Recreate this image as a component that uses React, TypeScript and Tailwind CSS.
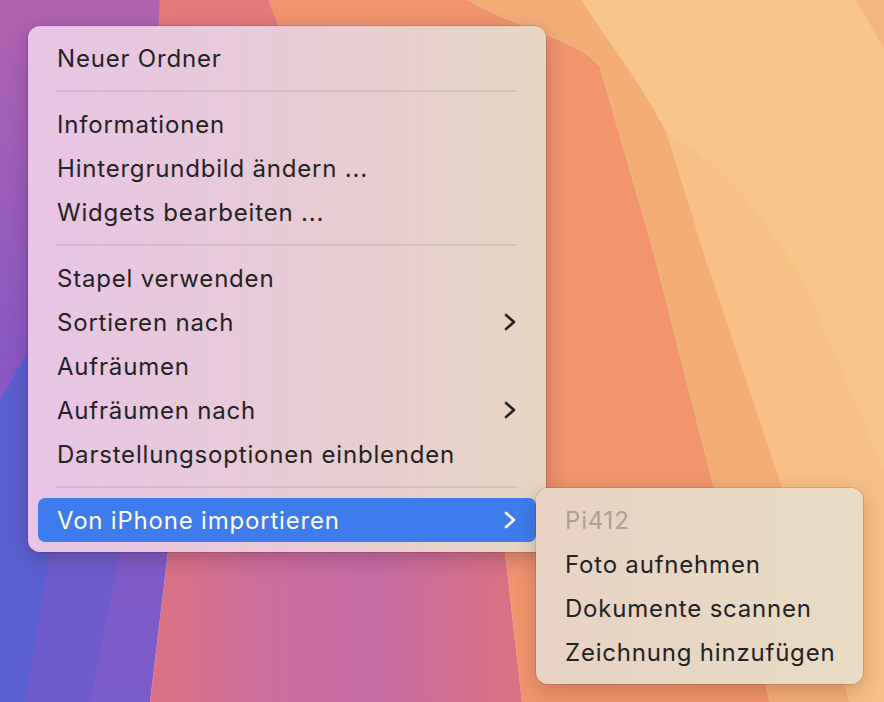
const font = { fontFamily: "Inter, 'Noto Sans', sans-serif" };

type Row = { label: string; sub?: boolean; active?: boolean } | "sep";

const rows: Row[] = [
  { label: "Neuer Ordner" },
  "sep",
  { label: "Informationen" },
  { label: "Hintergrundbild ändern ..." },
  { label: "Widgets bearbeiten ..." },
  "sep",
  { label: "Stapel verwenden" },
  { label: "Sortieren nach", sub: true },
  { label: "Aufräumen" },
  { label: "Aufräumen nach", sub: true },
  { label: "Darstellungsoptionen einblenden" },
  "sep",
  { label: "Von iPhone importieren", sub: true, active: true },
];

function Chevron({ white }: { white?: boolean }) {
  return (
    <svg width="12" height="18" viewBox="0 0 12 18" fill="none">
      <polyline
        points="2,2 10,9 2,16"
        stroke={white ? "#ffffff" : "#222222"}
        strokeWidth="2.6"
        strokeLinecap="round"
        strokeLinejoin="round"
      />
    </svg>
  );
}

function Wallpaper() {
  return (
    <svg className="absolute inset-0" width="884" height="702" viewBox="0 0 884 702">
      <defs>
        <linearGradient id="purple" x1="0" y1="0" x2="0" y2="1">
          <stop offset="0" stopColor="#b064b0" />
          <stop offset="0.5" stopColor="#8a58c2" />
          <stop offset="1" stopColor="#7a5cca" />
        </linearGradient>
        <linearGradient id="pink" x1="0" y1="0" x2="1" y2="0">
          <stop offset="0" stopColor="#dc7282" />
          <stop offset="0.3" stopColor="#cc6e9e" />
          <stop offset="0.6" stopColor="#c66ca6" />
          <stop offset="1" stopColor="#dc7280" />
        </linearGradient>
        <linearGradient id="pinkTop" x1="0" y1="0" x2="0" y2="1">
          <stop offset="0" stopColor="#e47a7a" stopOpacity="1" />
          <stop offset="0.6" stopColor="#e47a7a" stopOpacity="0" />
        </linearGradient>
      </defs>
      <path d="M582 0 H884 V702 H850 L780 480 L703 250 L667 133 C640 80 600 30 582 0Z" fill="#f6c68a" />
      <path d="M703 250 L780 480 L850 702 H884 V470 L807 290 C770 220 720 160 667 133 Z" fill="#f4b980" opacity="0.4" />
      <path d="M856 0 H884 V48 Z" fill="#f3b680" />
      <path d="M468 0 H582 C600 30 640 80 667 133 L703 250 L780 480 L850 702 H770 L712 480 L653 250 L600 67 C580 40 520 30 468 0Z" fill="#f3ae78" />
      <path d="M268 0 H468 C520 30 580 40 600 67 L653 250 L712 480 L770 702 H522 L505 552 C450 400 350 200 268 0Z" fill="#f0956e" />
      <path d="M160 0 H268 C350 200 450 400 505 552 L522 702 H150 L168 552 C170 450 155 200 160 0Z" fill="url(#pink)" />
      <path d="M160 0 H268 C350 200 450 400 505 552 L522 702 H150 L168 552 C170 450 155 200 160 0Z" fill="url(#pinkTop)" />
      <path d="M0 0 H160 C155 200 170 450 168 552 L150 702 H0 Z" fill="url(#purple)" />
      <path d="M40 330 L110 300 L120 552 L90 702 L20 702 L50 552Z" fill="#6e5ccc" />
      <path d="M0 400 L40 330 L50 552 L25 702 L0 702Z" fill="#5a60d2" />
    </svg>
  );
}

export default function App() {
  return (
    <div className="relative w-[884px] h-[702px] overflow-hidden" style={font}>
      <Wallpaper />
      <div className="relative pl-[28px] pt-[26px]">
        <div className="relative w-[518px]">
          <div className="rounded-[12px] bg-gradient-to-r from-[#e9c4e7] via-[#e8cad6] to-[#e7d6c2] px-[10px] py-[10px] shadow-[0_6px_20px_rgba(60,20,40,0.28)] ring-1 ring-black/10">
            {rows.map((r, i) =>
              r === "sep" ? (
                <div key={i} className="h-[22px] flex items-center px-[19px]">
                  <div className="h-[2px] w-full bg-black/[0.08]" />
                </div>
              ) : (
                <div
                  key={i}
                  className={`h-[44px] flex items-center justify-between pl-[19px] pr-[20px] rounded-[7px] text-[24px] tracking-[0.8px] ${
                    r.active ? "bg-[#3e7bed] text-white" : "text-[#232323]"
                  }`}
                >
                  <span className="leading-none pt-[2px]">{r.label}</span>
                  {r.sub && <Chevron white={r.active} />}
                </div>
              )
            )}
          </div>
          <div className="absolute left-[508px] top-[462px] w-[327px] rounded-[12px] bg-gradient-to-r from-[#e8d2c4] to-[#e9dcc3] px-[10px] py-[10px] shadow-[0_6px_20px_rgba(80,30,20,0.25)] ring-1 ring-black/10 text-[24px] tracking-[0.8px]">
            <div className="h-[44px] flex items-center pl-[19px] text-[#aaa19c]">
              <span className="leading-none pt-[2px]">Pi412</span>
            </div>
            {["Foto aufnehmen", "Dokumente scannen", "Zeichnung hinzufügen"].map((t) => (
              <div key={t} className="h-[44px] flex items-center pl-[19px] text-[#232323]">
                <span className="leading-none pt-[2px]">{t}</span>
              </div>
            ))}
          </div>
        </div>
      </div>
    </div>
  );
}
